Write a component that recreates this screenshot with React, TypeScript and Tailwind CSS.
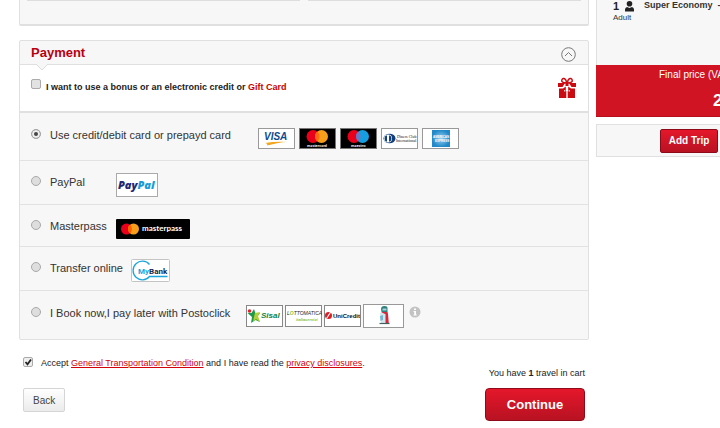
import type { ReactNode } from "react"
import { clsx } from "clsx"

interface PaymentOptionProps {
  id: string
  label: string
  rowClass: string
  logosClass: string
  defaultChecked?: boolean
  last?: boolean
  children: ReactNode
}

const PaymentOption = ({ id, label, rowClass, logosClass, defaultChecked, last, children }: PaymentOptionProps) => (
  <div className={clsx("flex items-start pl-[11px]", rowClass, !last && "border-b border-[#e2e2e2]")}>
    <input
      type="radio"
      name="payment"
      id={id}
      defaultChecked={defaultChecked}
      className="mt-1 size-2.5 shrink-0 appearance-none rounded-full border border-[#a9a9a9] bg-[#dedede] checked:bg-[#444] checked:shadow-[inset_0_0_0_2px_#eeeeee]"
    />
    <label htmlFor={id} className="ml-[9px] mt-0.5 whitespace-nowrap text-[11px] leading-4 text-[#333]">
      {label}
    </label>
    <div className={clsx("flex items-center", logosClass)}>{children}</div>
  </div>
)

const Visa = () => (
  <svg width="37" height="21" viewBox="0 0 37 21" role="img" aria-label="Visa">
    <rect x=".5" y=".5" width="36" height="20" fill="#fff" stroke="#999" />
    <text x="6" y="12" fontFamily="Liberation Sans" fontWeight="bold" fontStyle="italic" fontSize="10" fill="#0b4a8f">VISA</text>
    <path d="M7 15q12-2 23-1-4-.2-11 1.200Q13 16.500 9 17.500q1-2-2-2.500z" fill="#f3a51c" />
  </svg>
)

const Mastercard = () => (
  <svg width="37" height="21" viewBox="0 0 37 21" role="img" aria-label="Mastercard">
    <rect x=".5" y=".5" width="36" height="20" fill="#000" stroke="#777" />
    <circle cx="14" cy="8.5" r="6.5" fill="#eb001b" />
    <circle cx="22.5" cy="8.5" r="6.5" fill="#f79e1b" />
    <path d="M18.3 3.6a6.5 6.5 0 0 1 0 9.8a6.5 6.5 0 0 1 0-9.8z" fill="#ff6a10" />
    <text x="8" y="19" fontFamily="Lato" fontWeight="bold" fontSize="4" fill="#fff">mastercard</text>
  </svg>
)

const Maestro = () => (
  <svg width="37" height="21" viewBox="0 0 37 21" role="img" aria-label="Maestro">
    <rect x=".5" y=".5" width="36" height="20" fill="#000" stroke="#777" />
    <circle cx="14" cy="8.5" r="6.5" fill="#eb001b" />
    <circle cx="22.5" cy="8.5" r="6.5" fill="#159fe0" />
    <path d="M18.3 3.6a6.5 6.5 0 0 1 0 9.8a6.5 6.5 0 0 1 0-9.8z" fill="#7673c0" />
    <text x="11" y="19" fontFamily="Lato" fontWeight="bold" fontSize="4" fill="#fff">maestro</text>
  </svg>
)

const DinersClub = () => (
  <svg width="37" height="21" viewBox="0 0 37 21" role="img" aria-label="Diners Club International">
    <rect x=".5" y=".5" width="36" height="20" fill="#fff" stroke="#999" />
    <ellipse cx="8.500" cy="10.500" rx="6" ry="4.800" fill="#12407c" />
    <circle cx="7" cy="10.500" r="4" fill="#fff" />
    <path d="M6 7.300a3.300 3.300 0 0 0 0 6.400zM8 7.300a3.300 3.300 0 0 1 0 6.400z" fill="#12407c" />
    <text x="16" y="10" fontFamily="Liberation Serif" fontSize="4" fill="#112">Diners Club</text>
    <text x="15" y="14" fontFamily="Liberation Serif" fontSize="4" fill="#112">International</text>
  </svg>
)

const Amex = () => (
  <svg width="37" height="21" viewBox="0 0 37 21" role="img" aria-label="American Express">
    <defs>
      <radialGradient id="amex">
        <stop offset="0" stopColor="#9bd0ed" />
        <stop offset="1" stopColor="#2189c9" />
      </radialGradient>
    </defs>
    <rect x=".5" y=".5" width="36" height="20" fill="#fff" stroke="#999" />
    <rect x="10" y="2" width="18" height="17" fill="url(#amex)" />
    <text x="11" y="10" fontFamily="Liberation Sans" fontWeight="bold" fontSize="3" fill="#fff">AMERICAN</text>
    <text x="13" y="14" fontFamily="Liberation Sans" fontWeight="bold" fontSize="3" fill="#fff">EXPRESS</text>
  </svg>
)

const PayPal = () => (
  <svg width="42" height="24" viewBox="0 0 42 24" role="img" aria-label="PayPal">
    <rect x=".5" y=".5" width="41" height="23" fill="#fff" stroke="#aaa" />
    <text x="2" y="16" fontFamily="Open Sans" fontWeight="800" fontStyle="italic" fontSize="11" fill="#1e2a78">
      Pay<tspan fill="#179bd7">Pal</tspan>
    </text>
  </svg>
)

const Masterpass = () => (
  <svg width="74" height="20" viewBox="0 0 74 20" role="img" aria-label="Masterpass">
    <rect width="74" height="20" rx="1" fill="#000" />
    <circle cx="10.500" cy="10" r="5.500" fill="#eb001b" />
    <circle cx="17.500" cy="10" r="5.500" fill="#f79e1b" />
    <path d="M14 5.800a5.500 5.500 0 0 1 0 8.400a5.500 5.500 0 0 1 0-8.400z" fill="#ff5f00" />
    <text x="26" y="12" fontFamily="Lato" fontWeight="bold" fontSize="8" fill="#fff">masterpass</text>
  </svg>
)

const MyBank = () => (
  <svg width="39" height="23" viewBox="0 0 39 23" role="img" aria-label="MyBank">
    <rect x=".5" y=".5" width="38" height="22" rx="1" fill="#fff" stroke="#c4c4c4" />
    <path d="M18.500 5.500A9.300 9.300 0 1 0 18.500 17.500H36.500" fill="none" stroke="#1ba5dd" strokeWidth="1.300" />
    <text x="7" y="15" fontFamily="Roboto" fontWeight="bold" fontSize="8" fill="#1ba5dd">
      My<tspan fill="#14284c">Bank</tspan>
    </text>
  </svg>
)

const Sisal = () => (
  <svg width="37" height="22" viewBox="0 0 37 22" role="img" aria-label="Sisal">
    <rect x=".5" y=".5" width="36" height="21" fill="#fff" stroke="#888" />
    <path d="M1.500 8l4 0L8 4l1.500 4.500L14 8l-3 4 3 5-4.500-2L5 18l1-6z" fill="#1f9a48" />
    <path d="M9 8l5-1-2 4 2 6-4-3-3 3 1-5z" fill="#b5cf36" />
    <circle cx="3.500" cy="6" r="1.800" fill="#e02630" />
    <text x="15" y="13" fontFamily="Liberation Sans" fontWeight="bold" fontStyle="italic" fontSize="8" fill="#128343">Sisal</text>
  </svg>
)

const Lottomatica = () => (
  <svg width="37" height="22" viewBox="0 0 37 22" role="img" aria-label="Lottomatica Italia Servizi">
    <rect x=".5" y=".5" width="36" height="21" fill="#fff" stroke="#888" />
    <text x="2" y="10" fontFamily="Liberation Sans" fontStyle="italic" fontSize="5" fill="#222">
      L<tspan fill="#93c11f" fontWeight="bold">O</tspan>TTOMATICA
    </text>
    <text x="11" y="16" fontFamily="Liberation Sans" fontStyle="italic" fontWeight="bold" fontSize="4" fill="#93c11f">italiaservizi</text>
  </svg>
)

const UniCredit = () => (
  <svg width="37" height="22" viewBox="0 0 37 22" role="img" aria-label="UniCredit">
    <rect x=".5" y=".5" width="36" height="21" fill="#fff" stroke="#888" />
    <circle cx="4.500" cy="10.500" r="3.500" fill="#dd1c24" />
    <path d="M2.500 13.500L7 6.500" stroke="#fff" strokeWidth="1.200" />
    <text x="9" y="13" fontFamily="Liberation Sans" fontWeight="bold" fontSize="6" fill="#111">UniCredit</text>
  </svg>
)

const Postoclick = () => (
  <svg width="41" height="24" viewBox="0 0 41 24" role="img" aria-label="Postoclick">
    <rect x=".5" y=".5" width="40" height="23" fill="#fff" stroke="#999" />
    <path d="M18 5q0-3 3.500-3T24.500 5v3q-3 1.500-6 0z" fill="#2f7f7d" />
    <path d="M19.500 4.500h4v2h-4z" fill="#a9d3dc" />
    <path d="M17 9h6v10h-5q-1-5-1-10z" fill="#cfe8f1" />
    <path d="M17 12l3-1v5l-2.500 1z" fill="#77b7d3" />
    <path d="M18 8h6.500l.500 2h-3z" fill="#d8273a" />
    <path d="M22.500 10H25l.800 9h-3.300z" fill="#d8273a" />
    <path d="M16.500 19.500h10" stroke="#44605f" strokeWidth="1.200" />
  </svg>
)

const GiftIcon = () => (
  <svg width="18" height="21" viewBox="0 0 18 21" fill="#cc0a12" aria-hidden="true">
    <path d="M0 6h4l3 0-2.500 4H0zM18 6h-7l2.500 4H18zM7.500 6h3v3h-3z" />
    <path d="M1 11.500h4l2.800-2V14L6 13v1.500L8.300 14V21H1zM17 11.500h-4l-2.800-2V14l1.800-1v1.500L9.700 14V21H17z" />
    <path d="M8.500 6C4.500 6 3 4.500 4 2.500 5.200.300 8.500 1.500 8.500 6zM9.500 6C13.500 6 15 4.500 14 2.500 12.800.300 9.500 1.500 9.500 6z" fill="none" stroke="#cc0a12" strokeWidth="1.500" />
  </svg>
)

const PersonIcon = () => (
  <svg width="9" height="11" viewBox="0 0 9 11" fill="#222" aria-hidden="true">
    <circle cx="4.500" cy="2.800" r="2.800" />
    <path d="M0 10.500V8.500Q0 6.500 2 6L4.500 7 7 6q2 .5 2 2.500v2z" />
  </svg>
)

const InfoIcon = () => (
  <svg width="12" height="12" viewBox="0 0 12 12" aria-hidden="true">
    <circle cx="6" cy="6" r="5.500" fill="#c3c3c3" />
    <path d="M5 2.500h2v1.500H5zM4.500 5H7v3.500h.700v1H4.500v-1h.700V6h-.700z" fill="#fff" />
  </svg>
)

const PaymentPanel = () => (
  <section className="mt-3.5 rounded-xs border border-[#e0e0e0] bg-[#f7f7f7]">
    <div className="flex h-6 items-center justify-between border-b border-[#e0e0e0] pl-[11px] pr-3">
      <h2 className="text-[13px] leading-5 font-bold text-[#b8000f]">Payment</h2>
      <button type="button" aria-label="Collapse payment" className="cursor-pointer pt-1">
        <svg width="15" height="15" viewBox="0 0 15 15" fill="none" stroke="#777">
          <circle cx="7.500" cy="7.500" r="6.800" />
          <path d="M4 9l3.500-3.500L11 9" />
        </svg>
      </button>
    </div>
    <div className="relative flex h-12 items-start justify-between border-b-2 border-[#e0e0e0] bg-white pl-[11px] pr-3">
      <svg className="absolute -top-px left-4" width="12" height="7" viewBox="0 0 12 7">
        <path d="M0 0L6 6L12 0" fill="#f7f7f7" stroke="#dcdcdc" />
      </svg>
      <div className="flex pt-3.5">
        <input
          type="checkbox"
          id="bonus"
          className="size-2.5 appearance-none rounded-xs border border-[#aaa] bg-[#e2e2e2]"
        />
        <label htmlFor="bonus" className="ml-[5px] text-[9px] leading-4 font-bold text-[#222]">
          I want to use a bonus or an electronic credit or <span className="text-[#cc0000]">Gift Card</span>
        </label>
      </div>
      <div className="pt-3">
        <GiftIcon />
      </div>
    </div>

    <PaymentOption id="card" label="Use credit/debit card or prepayd card" rowClass="h-12 pt-3" logosClass="ml-[27px] mt-[3px] gap-1" defaultChecked>
      <Visa />
      <Mastercard />
      <Maestro />
      <DinersClub />
      <Amex />
    </PaymentOption>
    <PaymentOption id="paypal" label="PayPal" rowClass="h-11 pt-[11px]" logosClass="ml-[31px] mt-px">
      <PayPal />
    </PaymentOption>
    <PaymentOption id="masterpass" label="Masterpass" rowClass="h-[42px] pt-[11px]" logosClass="ml-[9px] mt-[3px]">
      <Masterpass />
    </PaymentOption>
    <PaymentOption id="transfer" label="Transfer online" rowClass="h-11 pt-[11px]" logosClass="ml-2 mt-px">
      <MyBank />
    </PaymentOption>
    <PaymentOption id="postoclick" label="I Book now,I pay later with Postoclick" rowClass="h-12 pt-3" logosClass="ml-4 mt-px gap-0.5" last>
      <Sisal />
      <Lottomatica />
      <UniCredit />
      <Postoclick />
      <button type="button" aria-label="More information" className="ml-[3px] cursor-pointer self-start pt-0.5">
        <InfoIcon />
      </button>
    </PaymentOption>
  </section>
)

const CheckoutFooter = () => (
  <footer className="px-1 pt-[15px]">
    <div className="flex items-start">
      <span className="grid">
        <input
          type="checkbox"
          id="accept"
          defaultChecked
          className="peer col-start-1 row-start-1 mt-0.5 size-2.5 appearance-none rounded-xs border border-[#aaa] bg-[#eee]"
        />
        <svg
          className="pointer-events-none invisible col-start-1 row-start-1 mt-0.5 peer-checked:visible"
          width="10"
          height="10"
          viewBox="0 0 10 10"
          aria-hidden="true"
        >
          <path d="M2.500 5l2 2.300L8 2.500" fill="none" stroke="#222" strokeWidth="1.800" />
        </svg>
      </span>
      <p className="ml-2 text-[9px] leading-4 text-[#222]">
        <label htmlFor="accept">Accept </label>
        <a href="#conditions" className="text-[#d3000c] underline">General Transportation Condition</a> and I have read the{" "}
        <a href="#privacy" className="text-[#d3000c] underline">privacy disclosures</a>.
      </p>
    </div>
    <div className="flex items-start justify-between">
      <button
        type="button"
        className="mt-[17px] h-6 cursor-pointer rounded-xs border border-[#d5d5d5] bg-linear-to-b from-white to-[#ebebeb] px-[9px] text-[10px] text-[#444]"
      >
        Back
      </button>
      <div className="-mt-1.5 flex flex-col items-end">
        <p className="text-[9px] leading-4 text-[#222]">
          You have <b>1</b> travel in cart
        </p>
        <button
          type="button"
          className="mt-[7px] h-[33px] w-[100px] cursor-pointer rounded-sm border border-[#8f0a18] bg-linear-to-b from-[#e5172b] to-[#b81222] text-[13px] font-bold text-white"
        >
          Continue
        </button>
      </div>
    </div>
  </footer>
)

const CartSummary = () => (
  <aside className="w-[124px] shrink-0 overflow-hidden whitespace-nowrap">
    <div className="flex h-[65px] items-start border-l border-[#e0e0e0] bg-[#f7f7f7] pl-4">
      <div className="w-[31px] shrink-0">
        <div className="flex items-center text-[11px] leading-3 font-bold text-[#222]">
          <span className="w-3">1</span>
          <PersonIcon />
        </div>
        <p className="text-[8px] leading-3 text-[#333]">Adult</p>
      </div>
      <p className="text-[9px] leading-[10px] font-bold text-[#333]">Super Economy &nbsp;-</p>
    </div>
    <div className="h-[52px] border-b border-[#b5101f] bg-[#d01424] text-white">
      <p className="pl-[63px] pt-0.5 text-[10px] leading-4">Final price (VAT</p>
      <p className="pl-[117px] pt-2 text-[17px] leading-5 font-bold">2</p>
    </div>
    <div className="mt-[7px] flex h-[33px] items-center border-y border-l border-[#e0e0e0] bg-[#f7f7f7] pl-[63px]">
      <button
        type="button"
        className="h-6 w-[58px] shrink-0 cursor-pointer rounded-xs border border-[#8f0a18] bg-linear-to-b from-[#e5172b] to-[#b81222] text-[10px] font-bold text-white"
      >
        Add Trip
      </button>
    </div>
  </aside>
)

export default function App() {
  return (
    <div className="flex min-h-screen items-start gap-[7px] overflow-hidden bg-white pl-[19px] font-['Liberation_Sans',Arial,sans-serif]">
      <main className="min-w-0 flex-1">
        <div className="flex h-[26px] items-start gap-2 rounded-b-xs border-x border-b-2 border-[#e0e0e0] bg-[#f7f7f7] px-[7px]">
          <div className="h-px flex-1 bg-[#dedede]" />
          <div className="h-px flex-1 bg-[#dedede]" />
        </div>
        <PaymentPanel />
        <CheckoutFooter />
      </main>
      <CartSummary />
    </div>
  )
}
